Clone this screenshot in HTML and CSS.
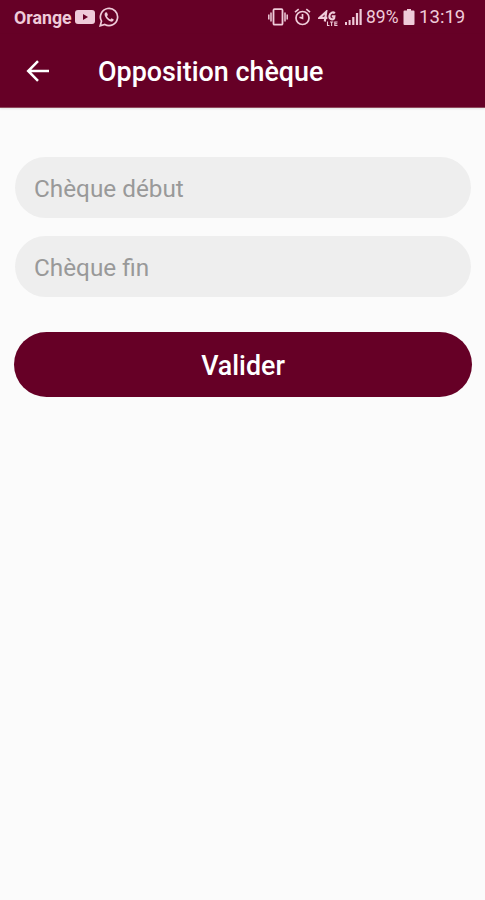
FILE: index.html
```html
<!DOCTYPE html>
<html lang="fr">
<head>
    <meta charset="UTF-8">
    <meta name="viewport" content="width=device-width, initial-scale=1.0">
    <title>Opposition chèque</title>
    <link rel="stylesheet" href="styles.css">
</head>
<body>
    <div class="status-bar">
        <span class="carrier">Orange</span>
        <svg class="icon-youtube" width="20" height="14" viewBox="0 0 20 14">
            <rect width="20" height="14" rx="3" fill="currentColor"/>
            <path d="M8 4v6l5-3z" fill="#660026"/>
        </svg>
        <svg class="icon-whatsapp" width="20" height="20" viewBox="0 0 20 20">
            <path d="M1.2 18.8l1.3-4.6a8.6 8.6 0 1 1 3.3 3.3z" fill="none" stroke="currentColor" stroke-width="1.7"/>
            <path d="M6.8 5.2c-1.4.8-1.5 2.6-.6 4.2 1.2 2.4 3 4.2 5.4 5.1 1.6.5 3-.4 3.2-1.9l-2.3-1.3-1.2 1.2c-1.6-.7-2.7-1.8-3.3-3.2l.9-1.2-.9-2.5z" fill="currentColor"/>
        </svg>
        <div class="status-right">
            <svg class="icon-vibrate" width="20" height="18" viewBox="0 0 20 18">
                <rect x="5.5" y="1.2" width="9" height="15.5" rx="1" fill="none" stroke="currentColor" stroke-width="1.8"/>
                <path d="M3 4.5v9M17 4.5v9M.8 6.5v5M19.2 6.5v5" stroke="currentColor" stroke-width="1.5"/>
            </svg>
            <svg class="icon-alarm" width="17" height="18" viewBox="0 0 17 18" fill="none" stroke="currentColor" stroke-width="1.7">
                <circle cx="8.5" cy="10" r="6.5"/>
                <path d="M8.5 6v4.3l-3-1M1 4.2l3.7-3M16 4.2l-3.7-3"/>
            </svg>
            <svg class="icon-4g" width="21" height="17" viewBox="0 0 21 17" fill="none" stroke="currentColor">
                <path d="M6.8 11.5L8.2 1.8 1.5 7.8h7.8" stroke-width="2.2"/>
                <path d="M16.8 3.4c-1.5-1.8-4.9-1-5.4 2.5-.4 3.3 2.8 4.3 4.7 2.5l.3-2h-2.6" stroke-width="2.1"/>
                <path d="M9.5 11.5v4h2M12 12h3.3M13.6 12v4M19.5 12h-2.7v3.5h2.7M16.8 13.8h2.5" stroke-width="1.1"/>
            </svg>
            <svg class="icon-signal" width="17" height="16" viewBox="0 0 17 16" fill="currentColor">
                <rect x="0" y="13" width="2" height="3"/>
                <rect x="3.6" y="11" width="2" height="5"/>
                <rect x="7.2" y="8" width="2.2" height="8"/>
                <rect x="10.9" y="4" width="2.2" height="12"/>
                <rect x="14.5" y="0" width="2.2" height="16"/>
            </svg>
            <span class="percent">89%</span>
            <svg class="icon-battery" width="12" height="16" viewBox="0 0 12 16">
                <path d="M4 0h4v1.5h2.5a1 1 0 0 1 1 1V15a1 1 0 0 1-1 1h-9a1 1 0 0 1-1-1V2.5a1 1 0 0 1 1-1H4z" fill="currentColor"/>
            </svg>
            <span class="clock">13:19</span>
        </div>
    </div>

    <header class="toolbar">
        <svg class="back" width="24" height="22" viewBox="0 0 24 22">
            <path d="M23 11H2.5M12 1.2L2.2 11l9.8 9.8" fill="none" stroke="#fff" stroke-width="2.5"/>
        </svg>
        <h1>Opposition chèque</h1>
    </header>

    <form class="form">
        <input type="text" placeholder="Chèque début">
        <input type="text" placeholder="Chèque fin">
        <button type="button">Valider</button>
    </form>
</body>
</html>
```

FILE: styles.css
```css
body {
    font-family: Roboto, sans-serif;
    background-color: #fbfbfb;
    margin: 0;
    min-height: 100vh;
}

.status-bar {
    display: flex;
    align-items: center;
    box-sizing: border-box;
    height: 34px;
    padding: 0 19px 0 14px;
    background-color: #660026;
    color: #efcbd9;
    white-space: nowrap;
}

.status-bar svg {
    flex: none;
}

.carrier {
    width: 61px;
    font-size: 17.8px;
    font-weight: 700;
}

.icon-whatsapp {
    margin-left: 4px;
}

.status-right {
    display: flex;
    align-items: center;
    margin-left: auto;
}

.icon-alarm {
    margin-left: 6px;
}

.icon-4g {
    margin: 3px 0 0 7px;
}

.icon-signal {
    margin-left: 6px;
}

.percent {
    width: 33px;
    margin-left: 4px;
    font-size: 17.5px;
}

.icon-battery {
    margin-left: 4px;
}

.clock {
    width: 47px;
    margin-left: 4px;
    font-size: 18.6px;
}

/* Toolbar */
.toolbar {
    display: flex;
    align-items: center;
    box-sizing: border-box;
    height: 74px;
    padding: 0 27px 0 26px;
    background-color: #660026;
    border-bottom: 1px solid #8f4a5d;
    box-shadow: 0 1px 2px rgba(0, 0, 0, 0.1);
}

.toolbar h1 {
    margin: 3px 0 0 48px;
    color: #fff;
    font-size: 26.9px;
    font-weight: 500;
}

/* Form */
.form {
    display: flex;
    flex-direction: column;
    padding: 49px 13px 0 14px;
}

.form input {
    box-sizing: border-box;
    height: 61px;
    margin: 0 1px 18px;
    padding: 1px 19px 0;
    border: none;
    border-radius: 31px;
    background-color: #eee;
    color: #333;
    font-family: inherit;
    font-size: 24.3px;
}

.form input::placeholder {
    color: #999;
}

.form button {
    height: 65px;
    margin-top: 17px;
    padding: 2px 0 0;
    border: none;
    border-radius: 33px;
    background-color: #660026;
    color: #fff;
    font-family: inherit;
    font-size: 26.8px;
    font-weight: 500;
}
```
